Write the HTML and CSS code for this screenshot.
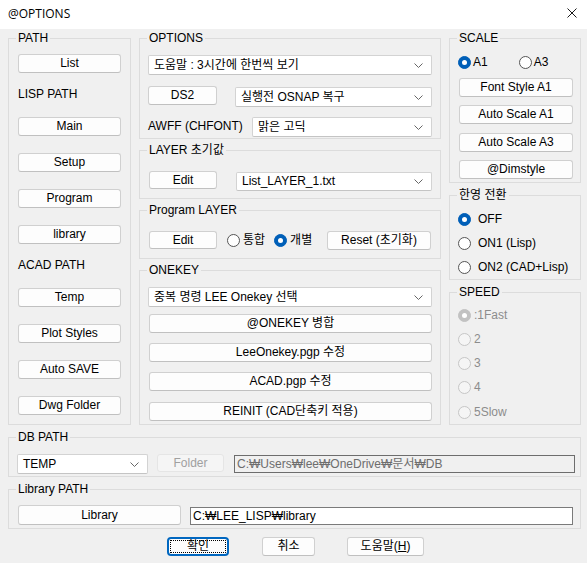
FILE: index.html
```html
<!DOCTYPE html>
<html lang="ko">
<head>
<meta charset="utf-8">
<title>@OPTIONS</title>
<link rel="stylesheet" href="styles.css">
</head>
<body>
<div class="window">
  <div class="titlebar">
    <span class="title">@OPTIONS</span>
    <svg class="close" width="10" height="10" viewBox="0 0 10 10"><path d="M0.5 0.5 L9.5 9.5 M9.5 0.5 L0.5 9.5" stroke="#1a1a1a" stroke-width="1"/></svg>
  </div>
  <div class="content">
    <div class="toprow">
      <div class="grp g-path">
        <span class="legend">PATH</span>
        <div class="btn w-path">List</div>
        <div class="lbl lbl-first">LISP PATH</div>
        <div class="btn w-path after-lbl">Main</div>
        <div class="btn w-path next">Setup</div>
        <div class="btn w-path next">Program</div>
        <div class="btn w-path next">library</div>
        <div class="lbl">ACAD PATH</div>
        <div class="btn w-path after-lbl">Temp</div>
        <div class="btn w-path next">Plot Styles</div>
        <div class="btn w-path next">Auto SAVE</div>
        <div class="btn w-path next">Dwg Folder</div>
      </div>

      <div class="midcol">
        <div class="grp g-options">
          <span class="legend">OPTIONS</span>
          <div class="combo c-full"><span>도움말 : 3시간에 한번씩 보기</span><svg class="chev" width="9" height="5" viewBox="0 0 9 5"><polyline points="0.5,0.5 4.5,4.5 8.5,0.5" fill="none" stroke="#666"/></svg></div>
          <div class="row r-ds2">
            <div class="btn w-ds2">DS2</div>
            <div class="combo c-osnap"><span>실행전 OSNAP 복구</span><svg class="chev" width="9" height="5" viewBox="0 0 9 5"><polyline points="0.5,0.5 4.5,4.5 8.5,0.5" fill="none" stroke="#666"/></svg></div>
          </div>
          <div class="row r-awff">
            <span class="awff">AWFF (CHFONT)</span>
            <div class="combo c-font"><span>맑은 고딕</span><svg class="chev" width="9" height="5" viewBox="0 0 9 5"><polyline points="0.5,0.5 4.5,4.5 8.5,0.5" fill="none" stroke="#666"/></svg></div>
          </div>
        </div>

        <div class="grp g-layer">
          <span class="legend">LAYER 초기값</span>
          <div class="row">
            <div class="btn w-edit">Edit</div>
            <div class="combo c-layer"><span>List_LAYER_1.txt</span><svg class="chev" width="9" height="5" viewBox="0 0 9 5"><polyline points="0.5,0.5 4.5,4.5 8.5,0.5" fill="none" stroke="#666"/></svg></div>
          </div>
        </div>

        <div class="grp g-prog">
          <span class="legend">Program LAYER</span>
          <div class="row r-prog">
            <div class="btn w-edit">Edit</div>
            <span class="radio rb-1"></span><span class="rtext">통합</span>
            <span class="radio on rb-2"></span><span class="rtext">개별</span>
            <div class="btn w-reset">Reset (초기화)</div>
          </div>
        </div>

        <div class="grp g-onekey">
          <span class="legend">ONEKEY</span>
          <div class="combo c-full"><span>중복 명령 LEE Onekey 선택</span><svg class="chev" width="9" height="5" viewBox="0 0 9 5"><polyline points="0.5,0.5 4.5,4.5 8.5,0.5" fill="none" stroke="#666"/></svg></div>
          <div class="btn w-onekey first-ok">@ONEKEY 병합</div>
          <div class="btn w-onekey next-ok">LeeOnekey.pgp 수정</div>
          <div class="btn w-onekey next-ok">ACAD.pgp 수정</div>
          <div class="btn w-onekey next-ok2">REINIT (CAD단축키 적용)</div>
        </div>
      </div>

      <div class="rightcol">
        <div class="grp g-scale">
          <span class="legend">SCALE</span>
          <div class="row r-scale">
            <span class="radio on"></span><span class="rtext t-a1">A1</span>
            <span class="radio rb-a3"></span><span class="rtext t-a3">A3</span>
          </div>
          <div class="btn w-scale s1">Font Style A1</div>
          <div class="btn w-scale s2">Auto Scale A1</div>
          <div class="btn w-scale s3">Auto Scale A3</div>
          <div class="btn w-scale s2">@Dimstyle</div>
        </div>

        <div class="grp g-han">
          <span class="legend">한영 전환</span>
          <div class="rrow"><span class="radio on"></span><span class="rtext t-han">OFF</span></div>
          <div class="rrow"><span class="radio"></span><span class="rtext t-han">ON1 (Lisp)</span></div>
          <div class="rrow"><span class="radio"></span><span class="rtext t-han">ON2 (CAD+Lisp)</span></div>
        </div>

        <div class="grp g-speed">
          <span class="legend">SPEED</span>
          <div class="rrow dis"><span class="radio on"></span><span class="rtext t-sp">:1Fast</span></div>
          <div class="rrow dis"><span class="radio"></span><span class="rtext t-sp">2</span></div>
          <div class="rrow dis"><span class="radio"></span><span class="rtext t-sp">3</span></div>
          <div class="rrow dis"><span class="radio"></span><span class="rtext t-sp">4</span></div>
          <div class="rrow dis last"><span class="radio"></span><span class="rtext t-sp">5Slow</span></div>
        </div>
      </div>
    </div>

    <div class="grp g-db">
      <span class="legend">DB PATH</span>
      <div class="row">
        <div class="combo c-temp"><span>TEMP</span><svg class="chev" width="9" height="5" viewBox="0 0 9 5"><polyline points="0.5,0.5 4.5,4.5 8.5,0.5" fill="none" stroke="#666"/></svg></div>
        <div class="btn disabled w-folder">Folder</div>
        <div class="textbox tb-dis">C:₩Users₩lee₩OneDrive₩문서₩DB</div>
      </div>
    </div>

    <div class="grp g-lib">
      <span class="legend">Library PATH</span>
      <div class="row">
        <div class="btn w-lib">Library</div>
        <div class="textbox tb-lib">C:₩LEE_LISP₩library</div>
      </div>
    </div>

    <div class="buttons">
      <div class="btn w-ok focus">확인</div>
      <div class="btn w-cancel">취소</div>
      <div class="btn w-help">도움말(<u>H</u>)</div>
    </div>
  </div>
</div>
</body>
</html>
```
FILE: styles.css
```css
html, body {
  margin: 0;
  padding: 0;
}
body {
  width: 587px;
  height: 563px;
  overflow: hidden;
  background: #f0f0f0;
  font-family: "Liberation Sans", "Noto Sans CJK KR", Arial, sans-serif;
  font-size: 12px;
  color: #000;
}
.window {
  width: 587px;
  height: 563px;
  background: #f0f0f0;
}
.titlebar {
  height: 29px;
  background: #fff;
  display: flex;
  align-items: center;
  justify-content: space-between;
  padding: 0 10px 0 8px;
  box-sizing: border-box;
}
.title {
  font-family: "Open Sans", "Noto Sans", sans-serif;
  font-size: 12px;
  margin-top: -2px;
}
.close {
  margin-top: -3px;
}
.content {
  padding: 9px 0 0 8px;
}
.toprow {
  display: flex;
  gap: 8px;
  height: 387px;
}
.grp {
  position: relative;
  border: 1px solid #dcdcdc;
  box-sizing: border-box;
}
.legend {
  position: absolute;
  top: -8px;
  left: 7px;
  padding: 0 2px;
  background: #f0f0f0;
  line-height: 14px;
  white-space: nowrap;
}
.row {
  display: flex;
  align-items: flex-start;
}

/* Buttons */
.btn {
  box-sizing: border-box;
  background: #fdfdfd;
  border: 1px solid #d0d0d0;
  border-bottom-color: #c0c0c0;
  border-radius: 3px;
  text-align: center;
  height: 19px;
  line-height: 17px;
  white-space: nowrap;
}
.btn.disabled {
  background: #f5f5f5;
  border-color: #e5e5e5;
  color: #a0a0a0;
}

/* Combo boxes */
.combo {
  box-sizing: border-box;
  background: #fff;
  border: 1px solid #d3d3d3;
  border-bottom-color: #c4c4c4;
  border-radius: 2px;
  height: 20px;
  line-height: 18px;
  padding: 0 0 0 5px;
  display: flex;
  align-items: center;
  justify-content: space-between;
  white-space: nowrap;
}
.combo .chev {
  margin-right: 8px;
  flex: none;
}

/* Textboxes */
.textbox {
  box-sizing: border-box;
  height: 18px;
  line-height: 16px;
  border: 1px solid #7a7a7a;
  padding: 0 2px;
  white-space: nowrap;
  overflow: hidden;
}
.tb-dis {
  background: #f0f0f0;
  color: #6d6d6d;
  border-color: #6d6d6d;
}
.tb-lib {
  background: #fff;
}

/* Radios */
.radio {
  position: relative;
  flex: none;
  width: 13px;
  height: 13px;
  box-sizing: border-box;
  border: 1px solid #555;
  border-radius: 50%;
  background: #fff;
}
.radio.on {
  background: #005fb8;
  border-color: #005fb8;
}
.radio.on::after {
  content: "";
  position: absolute;
  left: 3px;
  top: 3px;
  width: 5px;
  height: 5px;
  border-radius: 50%;
  background: #fff;
}
.rtext {
  line-height: 13px;
  white-space: nowrap;
}
.rrow {
  display: flex;
  align-items: center;
  height: 24px;
}
.rrow.dis .radio {
  border-color: #c6c6c6;
  background: #f5f5f5;
}
.rrow.dis .radio.on {
  background: #c2c2c2;
  border-color: #c2c2c2;
}
.rrow.dis .rtext {
  color: #8c8c8c;
}

/* PATH column */
.g-path {
  width: 123px;
  height: 387px;
  padding: 15px 0 0 9px;
  display: flex;
  flex-direction: column;
}
.w-path {
  width: 103px;
}
.lbl {
  line-height: 14px;
  margin-top: 14px;
  padding-left: 0;
}
.after-lbl {
  margin-top: 16px;
}
.next {
  margin-top: 17px;
}

/* Middle column */
.midcol {
  width: 302px;
  display: flex;
  flex-direction: column;
  gap: 11px;
}
.g-options {
  height: 101px;
  padding: 16px 8px 0 8px;
}
.c-full {
  width: 284px;
}
.r-ds2 {
  margin-top: 11px;
}
.w-ds2 {
  width: 69px;
}
.c-osnap {
  margin-left: 18px;
  margin-top: 1px;
  width: 197px;
}
.r-awff {
  margin-top: 10px;
  align-items: center;
}
.awff {
  width: 104px;
  line-height: 14px;
  margin-top: -3px;
}
.c-font {
  width: 180px;
}
.g-layer {
  height: 49px;
  padding: 20px 0 0 9px;
}
.w-edit {
  width: 68px;
  height: 18px;
  line-height: 16px;
}
.c-layer {
  margin-left: 19px;
  margin-top: 1px;
  width: 196px;
  height: 19px;
  line-height: 17px;
}
.g-prog {
  height: 49px;
  padding: 19px 9px 0 9px;
}
.r-prog {
  align-items: center;
}
.rb-1 {
  margin-left: 10px;
}
.r-prog .rtext {
  margin-left: 3px;
}
.rb-2 {
  margin-left: 9px;
}
.w-reset {
  width: 104px;
  margin-left: auto;
  margin-top: 1px;
}
.g-onekey {
  height: 155px;
  padding: 16px 8px 0 8px;
}
.w-onekey {
  width: 283px;
  margin-left: 1px;
}
.first-ok {
  margin-top: 7px;
}
.next-ok {
  margin-top: 10px;
}
.next-ok2 {
  margin-top: 11px;
}

/* Right column */
.rightcol {
  width: 132px;
  display: flex;
  flex-direction: column;
  gap: 12px;
}
.g-scale {
  height: 145px;
  padding: 17px 0 0 8px;
}
.r-scale {
  align-items: center;
  height: 13px;
}
.t-a1 {
  margin-left: 2px;
}
.rb-a3 {
  margin-left: 31px;
}
.t-a3 {
  margin-left: 2px;
}
.w-scale {
  width: 114px;
  margin-left: 1px;
}
.s1 {
  margin-top: 9px;
}
.s2 {
  margin-top: 8px;
}
.s3 {
  margin-top: 9px;
}
.g-han {
  height: 85px;
  padding: 11px 0 0 8px;
}
.t-han {
  margin-left: 7px;
}
.g-speed {
  height: 133px;
  padding: 10px 0 0 8px;
}
.t-sp {
  margin-left: 3px;
}
.rrow.last {
  height: 26px;
}

/* DB PATH */
.g-db {
  width: 573px;
  height: 40px;
  margin-top: 12px;
  padding: 16px 0 0 8px;
}
.c-temp {
  width: 131px;
}
.w-folder {
  width: 67px;
  height: 18px;
  line-height: 16px;
  margin-left: 9px;
}
.tb-dis {
  margin-left: 10px;
  margin-top: 1px;
  width: 341px;
}

/* Library PATH */
.g-lib {
  width: 573px;
  height: 40px;
  margin-top: 12px;
  padding: 15px 0 0 9px;
}
.w-lib {
  width: 163px;
  height: 20px;
  line-height: 18px;
}
.tb-lib {
  margin-left: 9px;
  margin-top: 2px;
  width: 383px;
}

/* Dialog buttons */
.buttons {
  display: flex;
  margin-top: 8px;
  padding-left: 159px;
}
.w-ok {
  width: 62px;
}
.focus {
  border: 2px solid #0067c0;
  border-radius: 4px;
  line-height: 15px;
  outline: 1px dotted #000;
  outline-offset: -4px;
}
.w-cancel {
  width: 53px;
  margin-left: 33px;
}
.w-help {
  width: 77px;
  margin-left: 32px;
}
.w-help u {
  text-decoration: underline;
  text-underline-offset: 1px;
}
```
